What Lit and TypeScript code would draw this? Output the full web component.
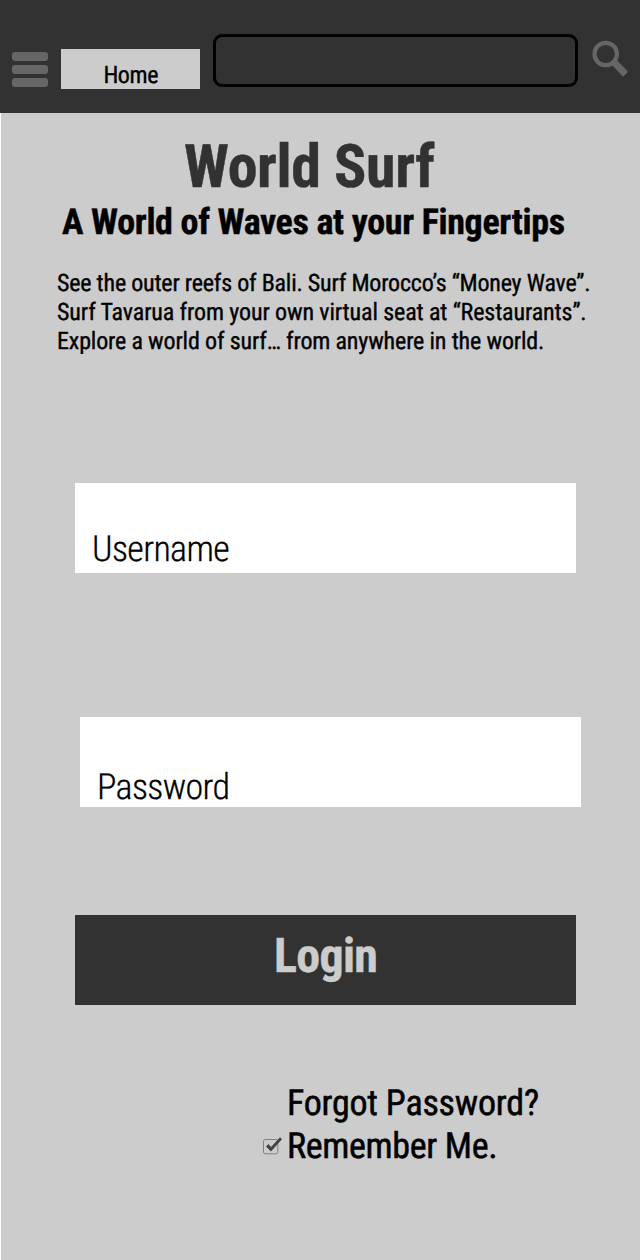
import { LitElement, html, css } from "lit";
import { customElement } from "lit/decorators.js";

@customElement("app-root")
export class AppRoot extends LitElement {
  static styles = css`
    :host {
      display: block;
      width: 640px;
      height: 1260px;
      overflow: hidden;
      background: #cccccc;
      color: #000;
      font-family: "Roboto Condensed", "Roboto", "Liberation Sans", sans-serif;
      font-stretch: 75%;
      font-weight: 400;
      white-space: nowrap;
      text-rendering: geometricPrecision;
    }
    * { box-sizing: border-box; }
    header {
      display: flex;
      align-items: flex-start;
      height: 113px;
      padding-left: 12px;
      background: #323232;
    }
    .menu { display: flex; flex-direction: column; gap: 4px; width: 36px; margin-top: 52px; }
    .menu i { height: 9px; border-radius: 3px; background: #666; }
    .home {
      width: 138.5px; height: 40.5px; margin: 48.5px 0 0 13.4px; padding-left: 42px;
      background: #ccc; font-size: 24px; line-height: 52px; letter-spacing: -0.4px;
      -webkit-text-stroke: 0.35px #000;
    }
    .search {
      width: 365px; height: 53px; margin: 34px 0 0 13px;
      border: 3px solid #000; border-radius: 9px;
    }
    .glass { display: block; margin: 40px 0 0 14px; }
    main { display: flex; flex-direction: column; align-items: flex-start; height: 1147px; padding-top: 26px; border-left: 1px solid #fff; }
    h1, h2, p { margin: 0; }
    h1 { padding-left: 183px; font-size: 60px; line-height: 55px; font-weight: 700; color: #323232; letter-spacing: -0.4px; -webkit-text-stroke: 0.4px #323232; }
    h2 { padding-left: 61px; font-size: 36px; line-height: 57px; height: 55px; font-weight: 700; letter-spacing: -0.335px; -webkit-text-stroke: 0.4px #000; }
    .intro { margin-top: 20.4px; padding-left: 56px; font-size: 24px; line-height: 28.8px; height: 86.4px; -webkit-text-stroke: 0.35px #000; }
    .bali { letter-spacing: -0.21px; }
    .tavarua { letter-spacing: -0.12px; }
    .explore { letter-spacing: -0.16px; }
    .field { width: 500.5px; height: 90px; background: #fff; font-size: 36px; font-weight: 300; padding-left: 17px; letter-spacing: -0.65px; -webkit-text-stroke: 0.3px #000; }
    .user { margin: 127.5px 0 0 74px; line-height: 132.6px; }
    .pass { margin: 143.7px 0 0 79px; line-height: 141.4px; }
    .login {
      width: 500.5px; height: 90px; margin: 108.3px 0 0 74px; padding-left: 199px;
      background: #323232; color: #ccc; font-size: 48px; font-weight: 700; line-height: 82.8px;
      letter-spacing: -0.7px; -webkit-text-stroke: 0.4px #ccc;
    }
    .links { margin: 76.7px 0 0 261px; font-size: 36px; line-height: 43.2px; -webkit-text-stroke: 0.5px #000; }
    .forgot { padding-left: 25px; letter-spacing: -0.22px; }
    .remember { display: flex; letter-spacing: -0.34px; }
    .check { display: block; width: 25px; height: 22px; margin-top: 10px; }
  `;

  render() {
    return html`
      <header>
        <div class="menu"><i></i><i></i><i></i></div>
        <div class="home"><span>Home</span></div>
        <div class="search"></div>
        <svg class="glass" width="38" height="40" viewBox="0 0 38 40">
          <circle cx="13.7" cy="14" r="11.2" fill="none" stroke="#666" stroke-width="4.2" />
          <path d="M19.5 24.5 L24.2 19.5 L35.1 30.8 Q36.1 31.8 35.1 32.8 L32 35.7 Q31 36.7 30 35.7 Z" fill="#666" />
        </svg>
      </header>
      <main>
        <h1><span>World Surf</span></h1>
        <h2><span>A World of Waves at your Fingertips</span></h2>
        <p class="intro">
          <span class="bali">See the outer reefs of Bali. Surf Morocco’s “Money Wave”.</span><br />
          <span class="tavarua">Surf Tavarua from your own virtual seat at “Restaurants”.</span><br />
          <span class="explore">Explore a world of surf… from anywhere in the world.</span>
        </p>
        <div class="field user"><span>Username</span></div>
        <div class="field pass"><span>Password</span></div>
        <div class="login"><span>Login</span></div>
        <div class="links">
          <div class="forgot"><span>Forgot Password?</span></div>
          <div class="remember">
            <svg class="check" viewBox="0 0 25 22">
              <rect x="1.5" y="4.5" width="14.3" height="14.3" rx="1.8" fill="none" stroke="#808080" stroke-width="1" />
              <path d="M4 11.5 L6.5 9 L9 12 L18 2.2 L20 4.2 L9 16.5 Z" fill="#444" />
            </svg>
            <span>Remember Me.</span>
          </div>
        </div>
      </main>
    `;
  }
}
